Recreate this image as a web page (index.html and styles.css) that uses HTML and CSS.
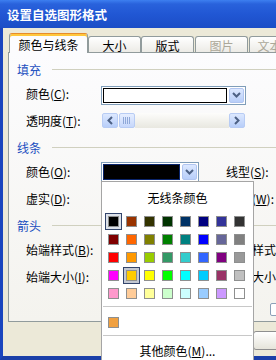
FILE: index.html
```html
<!DOCTYPE html>
<html lang="zh-CN">
<head>
    <meta charset="UTF-8">
    <title>设置自选图形格式</title>
    <link rel="stylesheet" href="styles.css">
</head>
<body>
    <div class="window">
        <div class="titlebar">设置自选图形格式</div>
        <div class="client">
            <div class="tabs">
                <div class="tab active">颜色与线条</div>
                <div class="tab">大小</div>
                <div class="tab">版式</div>
                <div class="tab disabled">图片</div>
                <div class="tab disabled">文本框</div>
            </div>
            <div class="panel">
                <div class="group"><span>填充</span></div>
                <div class="row">
                    <label class="lbl">颜色(<u>C</u>):</label>
                    <div class="combo wide">
                        <div class="box white"></div>
                        <div class="drop">
                            <svg width="9" height="6" viewBox="0 0 9 6"><path d="M1 1l3.5 3.5L8 1" fill="none" stroke="#4D6185" stroke-width="2"/></svg>
                        </div>
                    </div>
                </div>
                <div class="row">
                    <label class="lbl">透明度(<u>T</u>):</label>
                    <div class="slider">
                        <div class="sbtn">
                            <svg width="6" height="9" viewBox="0 0 6 9"><path d="M5 1L1.5 4.5L5 8" fill="none" stroke="#4D6185" stroke-width="2"/></svg>
                        </div>
                        <div class="thumb">
                            <svg width="8" height="7" viewBox="0 0 8 7"><path d="M0.5 0v7M2.5 0v7M4.5 0v7M6.5 0v7" stroke="#8FA8D8" stroke-width="1"/></svg>
                        </div>
                        <div class="track"></div>
                        <div class="sbtn">
                            <svg width="6" height="9" viewBox="0 0 6 9"><path d="M1 1l3.5 3.5L1 8" fill="none" stroke="#4D6185" stroke-width="2"/></svg>
                        </div>
                    </div>
                </div>
                <div class="group"><span>线条</span></div>
                <div class="row">
                    <label class="lbl">颜色(<u>O</u>):</label>
                    <div class="field">
                        <div class="combo narrow">
                            <div class="box black"></div>
                            <div class="drop">
                                <svg width="9" height="6" viewBox="0 0 9 6"><path d="M1 1l3.5 3.5L8 1" fill="none" stroke="#4D6185" stroke-width="2"/></svg>
                            </div>
                        </div>
                    </div>
                    <label>线型(<u>S</u>):</label>
                </div>
                <div class="row">
                    <label class="lbl">虚实(<u>D</u>):</label>
                    <div class="field far"></div>
                    <label>粗细(<u>W</u>):</label>
                </div>
                <div class="group"><span>箭头</span></div>
                <div class="row">
                    <label class="lbl">始端样式(<u>B</u>):</label>
                    <div class="field far"></div>
                    <label>末端样式(<u>E</u>):</label>
                </div>
                <div class="row">
                    <label class="lbl">始端大小(<u>I</u>):</label>
                    <div class="field far"></div>
                    <label>末端大小(<u>Z</u>):</label>
                </div>
                <div class="row extra">
                    <div class="check"></div>
                </div>
            </div>
            <div class="buttons">
                <div class="btn"></div>
                <div class="btn">取消</div>
            </div>
        </div>
    </div>

    <div class="popup">
        <div class="popup-title">无线条颜色</div>
        <div class="palette">
            <div class="cell sel"><i style="background:#000000"></i></div>
            <div class="cell"><i style="background:#993300"></i></div>
            <div class="cell"><i style="background:#333300"></i></div>
            <div class="cell"><i style="background:#003300"></i></div>
            <div class="cell"><i style="background:#003366"></i></div>
            <div class="cell"><i style="background:#000080"></i></div>
            <div class="cell"><i style="background:#333399"></i></div>
            <div class="cell"><i style="background:#333333"></i></div>

            <div class="cell"><i style="background:#800000"></i></div>
            <div class="cell"><i style="background:#FF6600"></i></div>
            <div class="cell"><i style="background:#808000"></i></div>
            <div class="cell"><i style="background:#008000"></i></div>
            <div class="cell"><i style="background:#008080"></i></div>
            <div class="cell"><i style="background:#0000FF"></i></div>
            <div class="cell"><i style="background:#666699"></i></div>
            <div class="cell"><i style="background:#808080"></i></div>

            <div class="cell"><i style="background:#FF0000"></i></div>
            <div class="cell"><i style="background:#FF9900"></i></div>
            <div class="cell"><i style="background:#99CC00"></i></div>
            <div class="cell"><i style="background:#339966"></i></div>
            <div class="cell"><i style="background:#33CCCC"></i></div>
            <div class="cell"><i style="background:#3366FF"></i></div>
            <div class="cell"><i style="background:#800080"></i></div>
            <div class="cell"><i style="background:#999999"></i></div>

            <div class="cell"><i style="background:#FF00FF"></i></div>
            <div class="cell hot"><i style="background:#FFCC00"></i></div>
            <div class="cell"><i style="background:#FFFF00"></i></div>
            <div class="cell"><i style="background:#00FF00"></i></div>
            <div class="cell"><i style="background:#00FFFF"></i></div>
            <div class="cell"><i style="background:#00CCFF"></i></div>
            <div class="cell"><i style="background:#993366"></i></div>
            <div class="cell"><i style="background:#C0C0C0"></i></div>

            <div class="cell"><i style="background:#FF99CC"></i></div>
            <div class="cell"><i style="background:#FFCC99"></i></div>
            <div class="cell"><i style="background:#FFFF99"></i></div>
            <div class="cell"><i style="background:#CCFFCC"></i></div>
            <div class="cell"><i style="background:#CCFFFF"></i></div>
            <div class="cell"><i style="background:#99CCFF"></i></div>
            <div class="cell"><i style="background:#CC99FF"></i></div>
            <div class="cell"><i style="background:#FFFFFF"></i></div>
        </div>
        <div class="sep"></div>
        <div class="recent">
            <div class="cell"><i style="background:#F0A040"></i></div>
        </div>
        <div class="sep"></div>
        <div class="more">其他颜色(<u>M</u>)...</div>
    </div>
</body>
</html>
```

FILE: styles.css
```css
body {
    margin: 0;
    overflow: hidden;
    background-color: #ECE9D8;
    font-family: "Noto Sans CJK SC", "Noto Sans", sans-serif;
    font-size: 12px;
    color: #000;
}
u {
    text-decoration: underline;
}
.window {
    width: 460px;
}
.titlebar {
    height: 28px;
    box-sizing: border-box;
    padding-left: 7px;
    display: flex;
    align-items: center;
    color: #fff;
    font-weight: bold;
    font-size: 12.5px;
    background: linear-gradient(#3D7FF0 0, #2962DC 4px, #2157D4 50%, #1B4DC6 100%);
}
.client {
    height: 332px;
    box-sizing: border-box;
    border-left: 3px solid #1A45BE;
    border-bottom: 4px solid #1A3FA8;
    padding: 5px 0 0 5px;
}

/* tabs */
.tabs {
    display: flex;
    align-items: flex-end;
    height: 19px;
    padding-left: 1px;
}
.tab {
    width: 53px;
    height: 16px;
    box-sizing: border-box;
    padding-top: 1px;
    border: 1px solid #919B9C;
    border-bottom: none;
    border-radius: 3px 3px 0 0;
    background: linear-gradient(#FFFFFF, #ECEBE6);
    display: flex;
    align-items: center;
    justify-content: center;
    white-space: nowrap;
    overflow: hidden;
}
.tab.active {
    width: 79px;
    height: 20px;
    margin-bottom: -1px;
    padding-top: 2px;
    position: relative;
    z-index: 1;
    background: #FCFCFE;
    border-top: 1px solid #E68B2C;
    box-shadow: inset 0 2px #FFC73C;
}
.tab.disabled {
    color: #ACA899;
}
.tab + .tab.disabled {
    margin-left: 1px;
}

/* panel */
.panel {
    width: 520px;
    height: 270px;
    box-sizing: border-box;
    padding-top: 5px;
    border: 1px solid #919B9C;
    background: linear-gradient(#FCFCFE, #F4F3EE);
}
.group {
    height: 22px;
    display: flex;
    align-items: center;
    padding-left: 8px;
    color: #1B4FC0;
}
.row + .group {
    margin-top: 2px;
}
.group span {
    width: 24px;
}
.group::after {
    content: "";
    flex: 1;
    margin-left: 11px;
    border-top: 1px solid #D0D0BF;
}
.row {
    height: 27px;
    display: flex;
    align-items: center;
    padding-left: 17px;
    white-space: nowrap;
}
.lbl {
    width: 75px;
}
.field {
    width: 125px;
}
.field.far {
    width: 127px;
}

.combo {
    display: flex;
    box-sizing: border-box;
    border: 1px solid #7F9DB9;
    padding: 1px;
    background: #fff;
}
.combo.wide {
    width: 145px;
    height: 19px;
    margin-top: 3px;
}
.combo.narrow {
    width: 98px;
    height: 20px;
}
.box {
    flex: 1;
    box-sizing: border-box;
}
.box.white {
    border: 1px solid #000;
    background: #fff;
}
.box.black {
    border: 1px solid #0A246A;
    background: #000;
}
.drop {
    width: 15px;
    margin-left: 2px;
    box-sizing: border-box;
    border: 1px solid #B1C5F0;
    border-radius: 2px;
    background: linear-gradient(#DCE8FF, #B8CEF9);
    display: flex;
    align-items: center;
    justify-content: center;
}

.slider {
    display: flex;
    width: 143px;
    height: 15px;
    margin-left: 1px;
    margin-top: -1px;
}
.sbtn, .thumb {
    width: 16px;
    box-sizing: border-box;
    border: 1px solid #B8CCF4;
    border-radius: 2px;
    background: linear-gradient(#DCE8FF, #B8CEF9);
    display: flex;
    align-items: center;
    justify-content: center;
}
.thumb {
    margin-left: 1px;
    background: linear-gradient(#E6EEFF, #C6D7FB);
}
.track {
    flex: 1;
    background: linear-gradient(#FDFDFB, #E8E7E0);
}

.row.extra {
    margin-top: 6px;
    padding-left: 261px;
}
.check {
    width: 13px;
    height: 13px;
    box-sizing: border-box;
    border: 1px solid #8CA0B8;
    border-radius: 2px;
    background: #fff;
}

.buttons {
    display: flex;
    gap: 6px;
    padding: 9px 0 0 164px;
}
.btn {
    width: 75px;
    height: 19px;
    box-sizing: border-box;
    border: 1px solid #8F8F8F;
    border-radius: 3px;
    background: linear-gradient(#FFFFFF, #E6E4DA);
    display: flex;
    align-items: center;
    justify-content: center;
}

/* colour popup */
.popup {
    position: absolute;
    left: 101px;
    top: 181px;
    width: 153px;
    height: 190px;
    box-sizing: border-box;
    border: 1px solid #A5A5A5;
    background: #fff;
}
.popup-title {
    height: 31px;
    display: flex;
    align-items: center;
    justify-content: center;
}
.palette {
    display: grid;
    grid-template-columns: repeat(8, 17px);
    grid-auto-rows: 17px;
    gap: 1px;
    padding-left: 3px;
}
.cell {
    width: 17px;
    height: 17px;
    box-sizing: border-box;
    display: flex;
    align-items: center;
    justify-content: center;
}
.cell i {
    width: 11px;
    height: 11px;
    box-sizing: border-box;
    border: 1px solid #8E8F8F;
}
.cell.sel {
    border: 1px solid #33456C;
    background: #DDE2EA;
}
.cell.hot {
    border: 1px solid #33456C;
    background: #C3C8D2;
}
.sep {
    height: 1px;
    margin: 4px 1px 0;
    background: #C8C8C8;
}
.recent {
    padding: 7px 0 0 3px;
}
.recent + .sep {
    margin-top: 4px;
}
.more {
    height: 28px;
    display: flex;
    align-items: center;
    justify-content: center;
}
```
